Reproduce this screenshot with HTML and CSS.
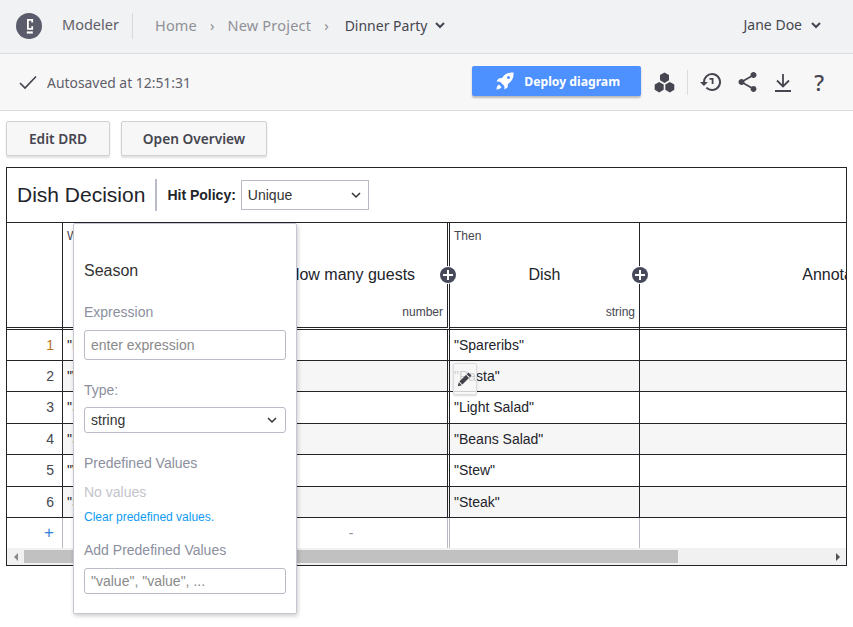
FILE: index.html
```html
<!DOCTYPE html>
<html lang="en">
<head>
    <meta charset="UTF-8">
    <meta name="viewport" content="width=device-width, initial-scale=1.0">
    <title>Dish Decision - Modeler</title>
    <link rel="stylesheet" href="styles.css">
</head>
<body>
    <header class="topbar">
        <svg class="logo" width="26" height="26" viewBox="0 0 26 26">
            <circle cx="13" cy="13" r="13" fill="#5b5c6b"/>
            <path d="M16.200 9.500V6.900h-4.300v9h4.300v-2.600" fill="none" stroke="#fff" stroke-width="1.800"/>
            <path d="M10.800 19.500h6" stroke="#fff" stroke-width="2.200"/>
        </svg>
        <span class="product">Modeler</span>
        <nav class="crumbs">
            <a>Home</a>
            <i>›</i>
            <a>New Project</a>
            <i>›</i>
            <b>Dinner Party</b>
            <svg class="chev" width="10" height="7" viewBox="0 0 10 7"><path d="M1 1l4 4 4-4" fill="none" stroke="#45464f" stroke-width="2"/></svg>
        </nav>
        <div class="user">
            <span>Jane Doe</span>
            <svg class="chev" width="10" height="7" viewBox="0 0 10 7"><path d="M1 1l4 4 4-4" fill="none" stroke="#45464f" stroke-width="2"/></svg>
        </div>
    </header>

    <div class="toolbar">
        <svg width="18" height="15" viewBox="0 0 18 15"><path d="M1 8l5 5L17 1.500" fill="none" stroke="#45464f" stroke-width="1.700"/></svg>
        <span class="saved">Autosaved at 12:51:31</span>
        <button class="deploy">
            <svg width="18" height="18" viewBox="0 0 18 18"><path d="M17.500.5c-5-.5-9 1.500-11.500 5.500l-3.500.5-2 3 3.500.2 4.300 4.300.2 3.500 3-2 .5-3.500c4-2.500 6-6.500 5.500-11.500zM12.500 4a1.500 1.500 0 1 1 0 3 1.500 1.500 0 0 1 0-3zM3 12.500c-1.500.5-2.500 2.500-2.500 5 2.500 0 4.500-1 5-2.500z" fill="#fff" fill-rule="evenodd"/></svg>
            Deploy diagram
        </button>
        <svg class="hexes" width="21" height="21" viewBox="0 0 21 21" fill="#45464f">
            <path d="M10.500.5l4.500 2.600v5.200l-4.500 2.600L6 8.300V3.100z"/>
            <path d="M5.200 10l4.500 2.600v5.200l-4.500 2.600L.7 17.800v-5.200z"/>
            <path d="M15.800 10l4.500 2.600v5.200l-4.500 2.600-4.500-2.600v-5.200z"/>
        </svg>
        <span class="sep"></span>
        <svg class="tool history" width="24" height="24" viewBox="0 0 24 24" fill="#45464f"><path d="M13 3a9 9 0 0 0-9 9H1l3.900 3.900L9 12H6a7 7 0 1 1 2.060 4.940l-1.420 1.420A9 9 0 1 0 13 3zm-2.500 5v1.800h2.200V14h1.800V8z"/></svg>
        <svg class="tool share" width="19" height="20" viewBox="3 2 18 20" fill="#45464f"><path d="M18 16.080c-.76 0-1.440.3-1.960.77L8.910 12.700c.05-.23.09-.46.09-.7s-.04-.47-.09-.7l7.050-4.110c.54.5 1.250.81 2.040.81 1.660 0 3-1.340 3-3s-1.340-3-3-3-3 1.340-3 3c0 .24.04.47.09.7L8.040 9.810C7.500 9.310 6.790 9 6 9c-1.660 0-3 1.340-3 3s1.340 3 3 3c.79 0 1.500-.31 2.040-.81l7.120 4.160c-.05.21-.08.43-.08.65 0 1.610 1.310 2.920 2.920 2.920s2.920-1.310 2.920-2.920-1.310-2.920-2.920-2.920z"/></svg>
        <svg class="tool download" width="18" height="19" viewBox="0 0 18 19" fill="none" stroke="#45464f" stroke-width="1.800"><path d="M9 1v12M3 7.500L9 13.500l6-6M1 18h16"/></svg>
        <span class="help">?</span>
    </div>

    <div class="actions">
        <button class="plain edit">Edit DRD</button>
        <button class="plain open">Open Overview</button>
    </div>

    <section class="decision">
        <div class="title-row">
            <h1>Dish Decision</h1>
            <label class="policy">Hit Policy:</label>
            <div class="select policy-select">Unique
                <svg width="10" height="7" viewBox="0 0 10 7"><path d="M1 1l4 4 4-4" fill="none" stroke="#333" stroke-width="1.500"/></svg>
            </div>
        </div>

        <div class="table-wrap">
            <table class="dmn">
                <colgroup>
                    <col class="c-num"><col class="c-in1"><col class="c-in2"><col class="c-out"><col class="c-note">
                </colgroup>
                <thead>
                    <tr>
                        <th class="num"></th>
                        <th><span class="tag">When</span><span class="name">Season</span></th>
                        <th class="last-in">
                            <span class="name">How many guests</span>
                            <span class="type">number</span>
                            <span class="plus"></span>
                        </th>
                        <th>
                            <span class="tag">Then</span>
                            <span class="name">Dish</span>
                            <span class="type">string</span>
                            <span class="plus"></span>
                        </th>
                        <th><span class="name">Annotation</span></th>
                    </tr>
                </thead>
                <tbody>
                    <tr><td class="num first">1</td><td>"Fall"</td><td class="last-in"></td><td>"Spareribs"</td><td></td></tr>
                    <tr><td class="num">2</td><td>"Winter"</td><td class="last-in"></td><td>"Pasta"</td><td></td></tr>
                    <tr><td class="num">3</td><td>"Spring"</td><td class="last-in"></td><td>"Light Salad"</td><td></td></tr>
                    <tr><td class="num">4</td><td>"Spring"</td><td class="last-in"></td><td>"Beans Salad"</td><td></td></tr>
                    <tr><td class="num">5</td><td>"Winter"</td><td class="last-in"></td><td>"Stew"</td><td></td></tr>
                    <tr><td class="num">6</td><td>"Summer"</td><td class="last-in"></td><td>"Steak"</td><td></td></tr>
                </tbody>
                <tfoot>
                    <tr><td class="num add">+</td><td></td><td class="last-in dash">-</td><td></td><td></td></tr>
                </tfoot>
            </table>
        </div>

        <div class="hscroll">
            <span class="arrow left"></span>
            <div class="track"><div class="thumb"></div></div>
            <span class="arrow right"></span>
        </div>

        <button class="edit-btn">
            <svg width="16" height="16" viewBox="0 0 16 16"><path d="M11.500 1.500l3 3-1.700 1.700-3-3zM9 3.900l3 3-6.600 6.600-3-3zM1.800 11.200l3 3-4 1z" fill="#3f4048"/></svg>
        </button>

        <div class="popover">
            <div class="pop-title">Season</div>
            <div class="pop-label">Expression</div>
            <input class="pop-input" type="text" placeholder="enter expression">
            <div class="pop-label type-label">Type:</div>
            <div class="select type-select">string
                <svg width="10" height="7" viewBox="0 0 10 7"><path d="M1 1l4 4 4-4" fill="none" stroke="#333" stroke-width="1.500"/></svg>
            </div>
            <div class="pop-label values-label">Predefined Values</div>
            <div class="no-values">No values</div>
            <a class="clear">Clear predefined values.</a>
            <div class="pop-label add-label">Add Predefined Values</div>
            <input class="pop-input short" type="text" placeholder="&quot;value&quot;, &quot;value&quot;, ...">
        </div>
    </section>
</body>
</html>
```

FILE: styles.css
```css
*{
    box-sizing: border-box;
}
body{
    margin: 0;
    min-height: 100vh;
    background-color: white;
    font-family: "Liberation Sans", Arial, sans-serif;
    color: #22242a;
}
.topbar{
    height: 54px;
    background-color: #f1f2f4;
    border-bottom: 1px solid #dcdcdc;
    display: flex;
    align-items: center;
    padding: 0 32px 2px 16px;
    font-family: "Noto Sans", sans-serif;
    font-size: 14.5px;
}
.product{
    color: #5f6069;
    margin-left: 20px;
    padding-right: 13px;
    padding-bottom: 3px;
    border-right: 1px solid #d8d9dc;
    line-height: 23px;
}
.crumbs{
    display: flex;
    align-items: baseline;
    margin-left: 22px;
    margin-bottom: 2px;
    color: #8f9096;
}
.crumbs a{
    letter-spacing: .2px;
}
.crumbs i{
    font-style: normal;
    margin: 0 13px;
}
.crumbs b{
    margin-left: 3px;
    font-weight: 400;
    font-size: 14px;
    color: #45464f;
}
.chev{
    margin-left: 8px;
    margin-top: 2px;
}
.crumbs .chev{
    align-self: center;
}
.user{
    margin-left: auto;
    margin-bottom: 2px;
    color: #45464f;
    font-size: 14px;
    display: flex;
    align-items: center;
}
.user .chev{
    margin-left: 9px;
}
.toolbar{
    height: 57px;
    background-color: #f7f7f8;
    border-bottom: 1px solid #dcdcdc;
    display: flex;
    align-items: center;
    padding: 0 29px 0 19px;
    font-family: "Noto Sans", sans-serif;
}
.saved{
    margin-left: 10px;
    font-size: 13.9px;
    color: #5f6069;
}
.deploy{
    margin-left: auto;
    margin-bottom: 2px;
    width: 169px;
    height: 30px;
    padding-left: 9px;
    border: none;
    border-radius: 2px;
    background-color: #4d90ff;
    box-shadow: 0 2px 2px rgba(0,0,0,.25);
    color: white;
    font-family: "Noto Sans", sans-serif;
    font-size: 12.2px;
    font-weight: 700;
    display: flex;
    align-items: center;
    justify-content: center;
    gap: 10px;
}
.hexes{
    margin-left: 13px;
}
.sep{
    width: 1px;
    height: 25px;
    background-color: #dcdcdc;
    margin: 0 11px 0 12px;
}
.history{
    margin-right: 15px;
}
.share{
    margin-right: 17px;
}
.download{
    margin-right: 22px;
}
.help{
    font-size: 22px;
    font-weight: 500;
    color: #45464f;
}
.actions{
    display: flex;
    gap: 11px;
    padding: 10px 6px 11px;
}
.plain{
    height: 35px;
    padding: 0;
    border: 1px solid #d0d1d4;
    border-radius: 2px;
    background-color: #f7f7f8;
    box-shadow: 0 2px 2px rgba(0,0,0,.12);
    font-family: "Noto Sans", sans-serif;
    font-size: 13.7px;
    font-weight: 600;
    color: #45464f;
}
.edit{
    width: 104px;
}
.open{
    width: 146px;
}
.decision{
    position: relative;
    margin: 0 6px;
    height: 399px;
    border: 1px solid #22242a;
}
.title-row{
    height: 55px;
    display: flex;
    align-items: center;
    padding: 0 0 0 10px;
    border-bottom: 1px solid #22242a;
}
h1{
    margin: 0;
    font-size: 21px;
    font-weight: 400;
    padding-right: 10px;
    border-right: 2px solid #b9bcc6;
    line-height: 32px;
}
.policy{
    font-size: 14px;
    font-weight: 700;
    margin-left: 10px;
}
.select{
    display: flex;
    align-items: center;
    justify-content: space-between;
    border: 1px solid #b9bcc6;
    color: #333;
}
.policy-select{
    width: 128px;
    height: 30px;
    margin-left: 5px;
    padding: 0 7px 0 6px;
    font-size: 14px;
}
.table-wrap{
    height: 325px;
    overflow: hidden;
}
.dmn{
    table-layout: fixed;
    width: 1035px;
    border-collapse: separate;
    border-spacing: 0;
    font-size: 14px;
}
.c-num{ width: 56px; }
.c-in1{ width: 197px; }
.c-in2{ width: 190px; }
.c-out{ width: 190px; }
.c-note{ width: 402px; }
.dmn th{
    height: 107px;
    position: relative;
    font-weight: 400;
    padding: 0;
    border-bottom: 3px double #22242a;
    border-right: 1px solid #22242a;
}
.dmn td{
    height: 31px;
    padding: 0 4px;
    border-bottom: 1px solid #22242a;
    border-right: 1px solid #22242a;
}
.dmn .last-in{
    border-right: 3px double #22242a;
}
.dmn tbody tr:nth-child(3) td, .dmn tbody tr:nth-child(5) td{
    height: 32px;
    padding-bottom: 1px;
}
.dmn tbody tr:nth-child(even) td:not(.num){
    background-color: #f6f6f6;
}
.dmn .num{
    text-align: right;
    padding-right: 8px;
    color: #45464f;
}
.dmn .first{
    color: #b5751a;
}
.dmn tfoot td{
    height: 30px;
    border-bottom: none;
    border-right-color: #b9bcc6;
}
.dmn tfoot .last-in{
    border-right-color: #b9bcc6;
}
.dmn .add{
    color: #2f80d8;
    font-size: 17px;
}
.dmn .dash{
    color: #8f9096;
    text-align: center;
    padding-right: 9px;
}
.tag{
    position: absolute;
    top: 6px;
    left: 4px;
    font-size: 12px;
    color: #45464f;
}
.name{
    position: absolute;
    top: 43px;
    left: 0;
    right: 0;
    text-align: center;
    font-size: 16px;
}
.last-in .name{
    right: 4px;
}
.type{
    position: absolute;
    right: 4px;
    top: 82px;
    font-size: 12px;
    color: #45464f;
}
.plus{
    position: absolute;
    top: 44px;
    right: -9px;
    width: 16px;
    height: 16px;
    border-radius: 50%;
    background-color: #45495a;
    box-shadow: 0 0 0 1px white;
    z-index: 2;
}
.plus::before, .plus::after{
    content: "";
    position: absolute;
    background-color: white;
}
.plus::before{
    left: 3px;
    top: 7px;
    width: 10px;
    height: 2px;
}
.plus::after{
    left: 7px;
    top: 3px;
    width: 2px;
    height: 10px;
}
.hscroll{
    height: 17px;
    background-color: #f1f1f1;
    display: flex;
    align-items: center;
}
.track{
    flex: 1;
    height: 13px;
}
.thumb{
    width: 654px;
    height: 13px;
    background-color: #c1c1c1;
}
.arrow{
    width: 17px;
    display: flex;
    justify-content: center;
}
.arrow::before{
    content: "";
    border: 4px solid transparent;
}
.arrow.left::before{
    border-left-width: 0;
    border-right-color: #8a8a8a;
}
.arrow.right::before{
    border-right-width: 0;
    border-left-color: #505050;
}
.edit-btn{
    position: absolute;
    left: 446px;
    top: 195px;
    width: 24px;
    height: 32px;
    padding: 0;
    border: 1px solid #dcdcdc;
    border-radius: 2px;
    background-color: rgba(247,247,248,.8);
    box-shadow: 0 1px 2px rgba(0,0,0,.15);
    display: flex;
    align-items: center;
    justify-content: center;
}
.popover{
    position: absolute;
    left: 66px;
    top: 55px;
    width: 224px;
    height: 391px;
    padding: 37px 10px 0;
    background-color: white;
    border: 1px solid #c5c7d0;
    border-radius: 2px;
    box-shadow: 1px 2px 4px rgba(0,0,0,.2);
    z-index: 3;
}
.pop-title{
    font-size: 16px;
    line-height: 20px;
    color: #333;
}
.pop-label{
    font-size: 14px;
    color: #8c8f9e;
    line-height: 18px;
    margin-top: 22px;
}
.pop-input{
    display: block;
    width: 100%;
    height: 30px;
    margin-top: 9px;
    padding: 0 6px;
    border: 1px solid #b9bcc6;
    border-radius: 3px;
    font-family: "Liberation Sans", Arial, sans-serif;
    font-size: 14px;
    color: #333;
}
.pop-input.short{
    height: 26px;
}
.pop-input::placeholder{
    color: #8a8a8a;
}
.type-label{
    margin-top: 21px;
}
.type-select{
    height: 26px;
    margin-top: 8px;
    padding: 0 8px 0 6px;
    border-radius: 3px;
    font-size: 14px;
}
.values-label{
    margin-top: 21px;
}
.no-values{
    margin-top: 11px;
    font-size: 14px;
    line-height: 18px;
    color: #c3c4cb;
}
.clear{
    display: block;
    margin-top: 8px;
    font-size: 12px;
    line-height: 16px;
    color: #0f9bf2;
}
.add-label{
    margin-top: 16px;
}
```
